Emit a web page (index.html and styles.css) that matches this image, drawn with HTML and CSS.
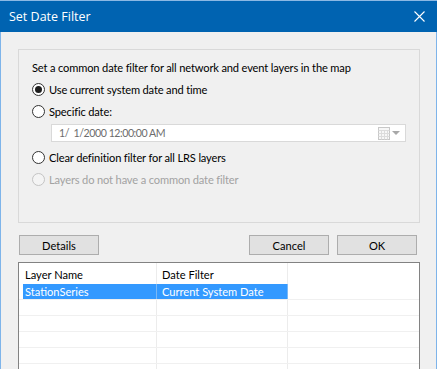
FILE: index.html
```html
<!DOCTYPE html>
<html lang="en">
<head>
	<meta charset="UTF-8">
	<title>Set Date Filter</title>
	<link rel="stylesheet" href="styles.css">
</head>
<body>
	<div class="window">
		<div class="titlebar">
			<span class="title">Set Date Filter</span>
			<svg class="close" width="11" height="11" viewBox="0 0 11 11">
				<path d="M0.5 0.5 L10.5 10.5 M10.5 0.5 L0.5 10.5" stroke="#fff" stroke-width="1.1" fill="none"/>
			</svg>
		</div>
		<div class="client">
			<div class="group">
				<div class="row">Set a common date filter for all network and event layers in the map</div>
				<div class="row"><span class="radio checked"></span>Use current system date and time</div>
				<div class="row"><span class="radio"></span>Specific date:</div>
				<div class="datebox">
					<span class="datetext">1/  1/2000 12:00:00 AM</span>
					<svg class="cal" width="12" height="13" viewBox="0 0 12 13">
						<rect x="0.5" y="0.5" width="11" height="12" fill="#f7f7f7" stroke="#c8c8c8"/>
						<path d="M0.5 3.5 H11.5 M0.5 6.5 H11.5 M0.5 9.5 H11.5 M3.5 3.5 V12.5 M6.5 3.5 V12.5 M9.5 3.5 V12.5" stroke="#dcdcdc" fill="none"/>
					</svg>
					<span class="arrow"></span>
				</div>
				<div class="row"><span class="radio"></span>Clear definition filter for all LRS layers</div>
				<div class="row disabled"><span class="radio"></span>Layers do not have a common date filter</div>
			</div>

			<div class="buttons">
				<button class="btn">Details</button>
				<span class="spacer"></span>
				<button class="btn">Cancel</button>
				<button class="btn">OK</button>
			</div>

			<div class="list">
				<div class="lrow head">
					<span class="cell c1">Layer Name</span>
					<span class="cell c2">Date Filter</span>
				</div>
				<div class="lrow sel">
					<span class="cell c1">StationSeries</span>
					<span class="cell c2">Current System Date</span>
				</div>
				<div class="lrow"><span class="cell c1"></span><span class="cell c2"></span></div>
				<div class="lrow"><span class="cell c1"></span><span class="cell c2"></span></div>
				<div class="lrow"><span class="cell c1"></span><span class="cell c2"></span></div>
				<div class="lrow"><span class="cell c1"></span><span class="cell c2"></span></div>
				<div class="lrow"><span class="cell c1"></span><span class="cell c2"></span></div>
			</div>
		</div>
		<div class="cutline"></div>
	</div>
</body>
</html>
```

FILE: styles.css
```css
html, body{margin: 0; padding: 0; background: #fff;}
body{font-family: Lato, "Liberation Sans", sans-serif; font-size: 11.1px; color: #000;}

.window{width: 437px; height: 369px; display: flex; flex-direction: column;}

.titlebar{height: 31px; border-top: 1px solid #8bb8e4; background: #0063b1; display: flex; align-items: center; justify-content: space-between; padding: 0 12px 0 9px; flex: none;}
.title{color: #fff; font-size: 12.5px; font-family: "Open Sans", "Liberation Sans", sans-serif;}
.close{display: block;}

.client{height: 334px; flex: none; background: #f0f0f0; border-left: 1px solid #7eb4ea; border-right: 1px solid #7eb4ea; padding: 17px 16px 0 17px; overflow: hidden; display: flex; flex-direction: column;}

.group{border: 1px solid #d9d9d9; padding: 6px 13px 32px 13px; display: flex; flex-direction: column; letter-spacing: -0.15px;}
.row{height: 22px; display: flex; align-items: center; white-space: nowrap;}
.row.disabled{color: #a2a2a2;}

.radio{width: 11px; height: 11px; border: 1px solid #333; border-radius: 50%; background: #fff; margin-right: 4px; position: relative; flex: none;}
.radio.checked::after{content: ""; position: absolute; left: 2px; top: 2px; width: 7px; height: 7px; border-radius: 50%; background: #1e1e1e;}
.row.disabled .radio{border-color: #c4c4c4; background: #f4f4f4;}

.datebox{height: 16px; margin: 2px 0 4px 19px; border: 1px solid #d9d9d9; background: #fff; display: flex; align-items: center; padding: 0 5px 0 7px;}
.datetext{flex: 1; color: #6d6d6d; white-space: pre; font-size: 10.6px; letter-spacing: -0.45px;}
.cal{display: block; margin-right: 2px;}
.arrow{width: 0; height: 0; border-left: 4px solid transparent; border-right: 4px solid transparent; border-top: 4px solid #a8a8a8;}

.buttons{display: flex; gap: 8px; margin: 12px 3px 0 1px; flex: none;}
.spacer{flex: 1;}
.btn{width: 80px; height: 20px; margin: 0; padding: 0; background: #e1e1e1; border: 1px solid #adadad; font: inherit; color: #000;}

.list{margin-top: 7px; flex: 1; background: #fff; border: 1px solid #828282; border-bottom: none;}
.lrow{height: 15px; display: flex; border-bottom: 1px solid #f0f0f0; padding-left: 4px;}
.lrow.head{height: 21px; border-bottom: none;}
.cell{border-right: 1px solid #ececec; white-space: nowrap; line-height: 15px;}
.head .cell{line-height: 21px; padding-top: 1px;}
.c1{width: 131px; padding-left: 2px;}
.c2{width: 125px; padding-left: 5px;}
.sel .cell{background: #3399ff; color: #fff; border-right-color: #7ab8f5;}

.cutline{height: 2px; flex: none; background: repeating-linear-gradient(90deg, #5b9bd5 0 4px, transparent 4px 6px);}
```
